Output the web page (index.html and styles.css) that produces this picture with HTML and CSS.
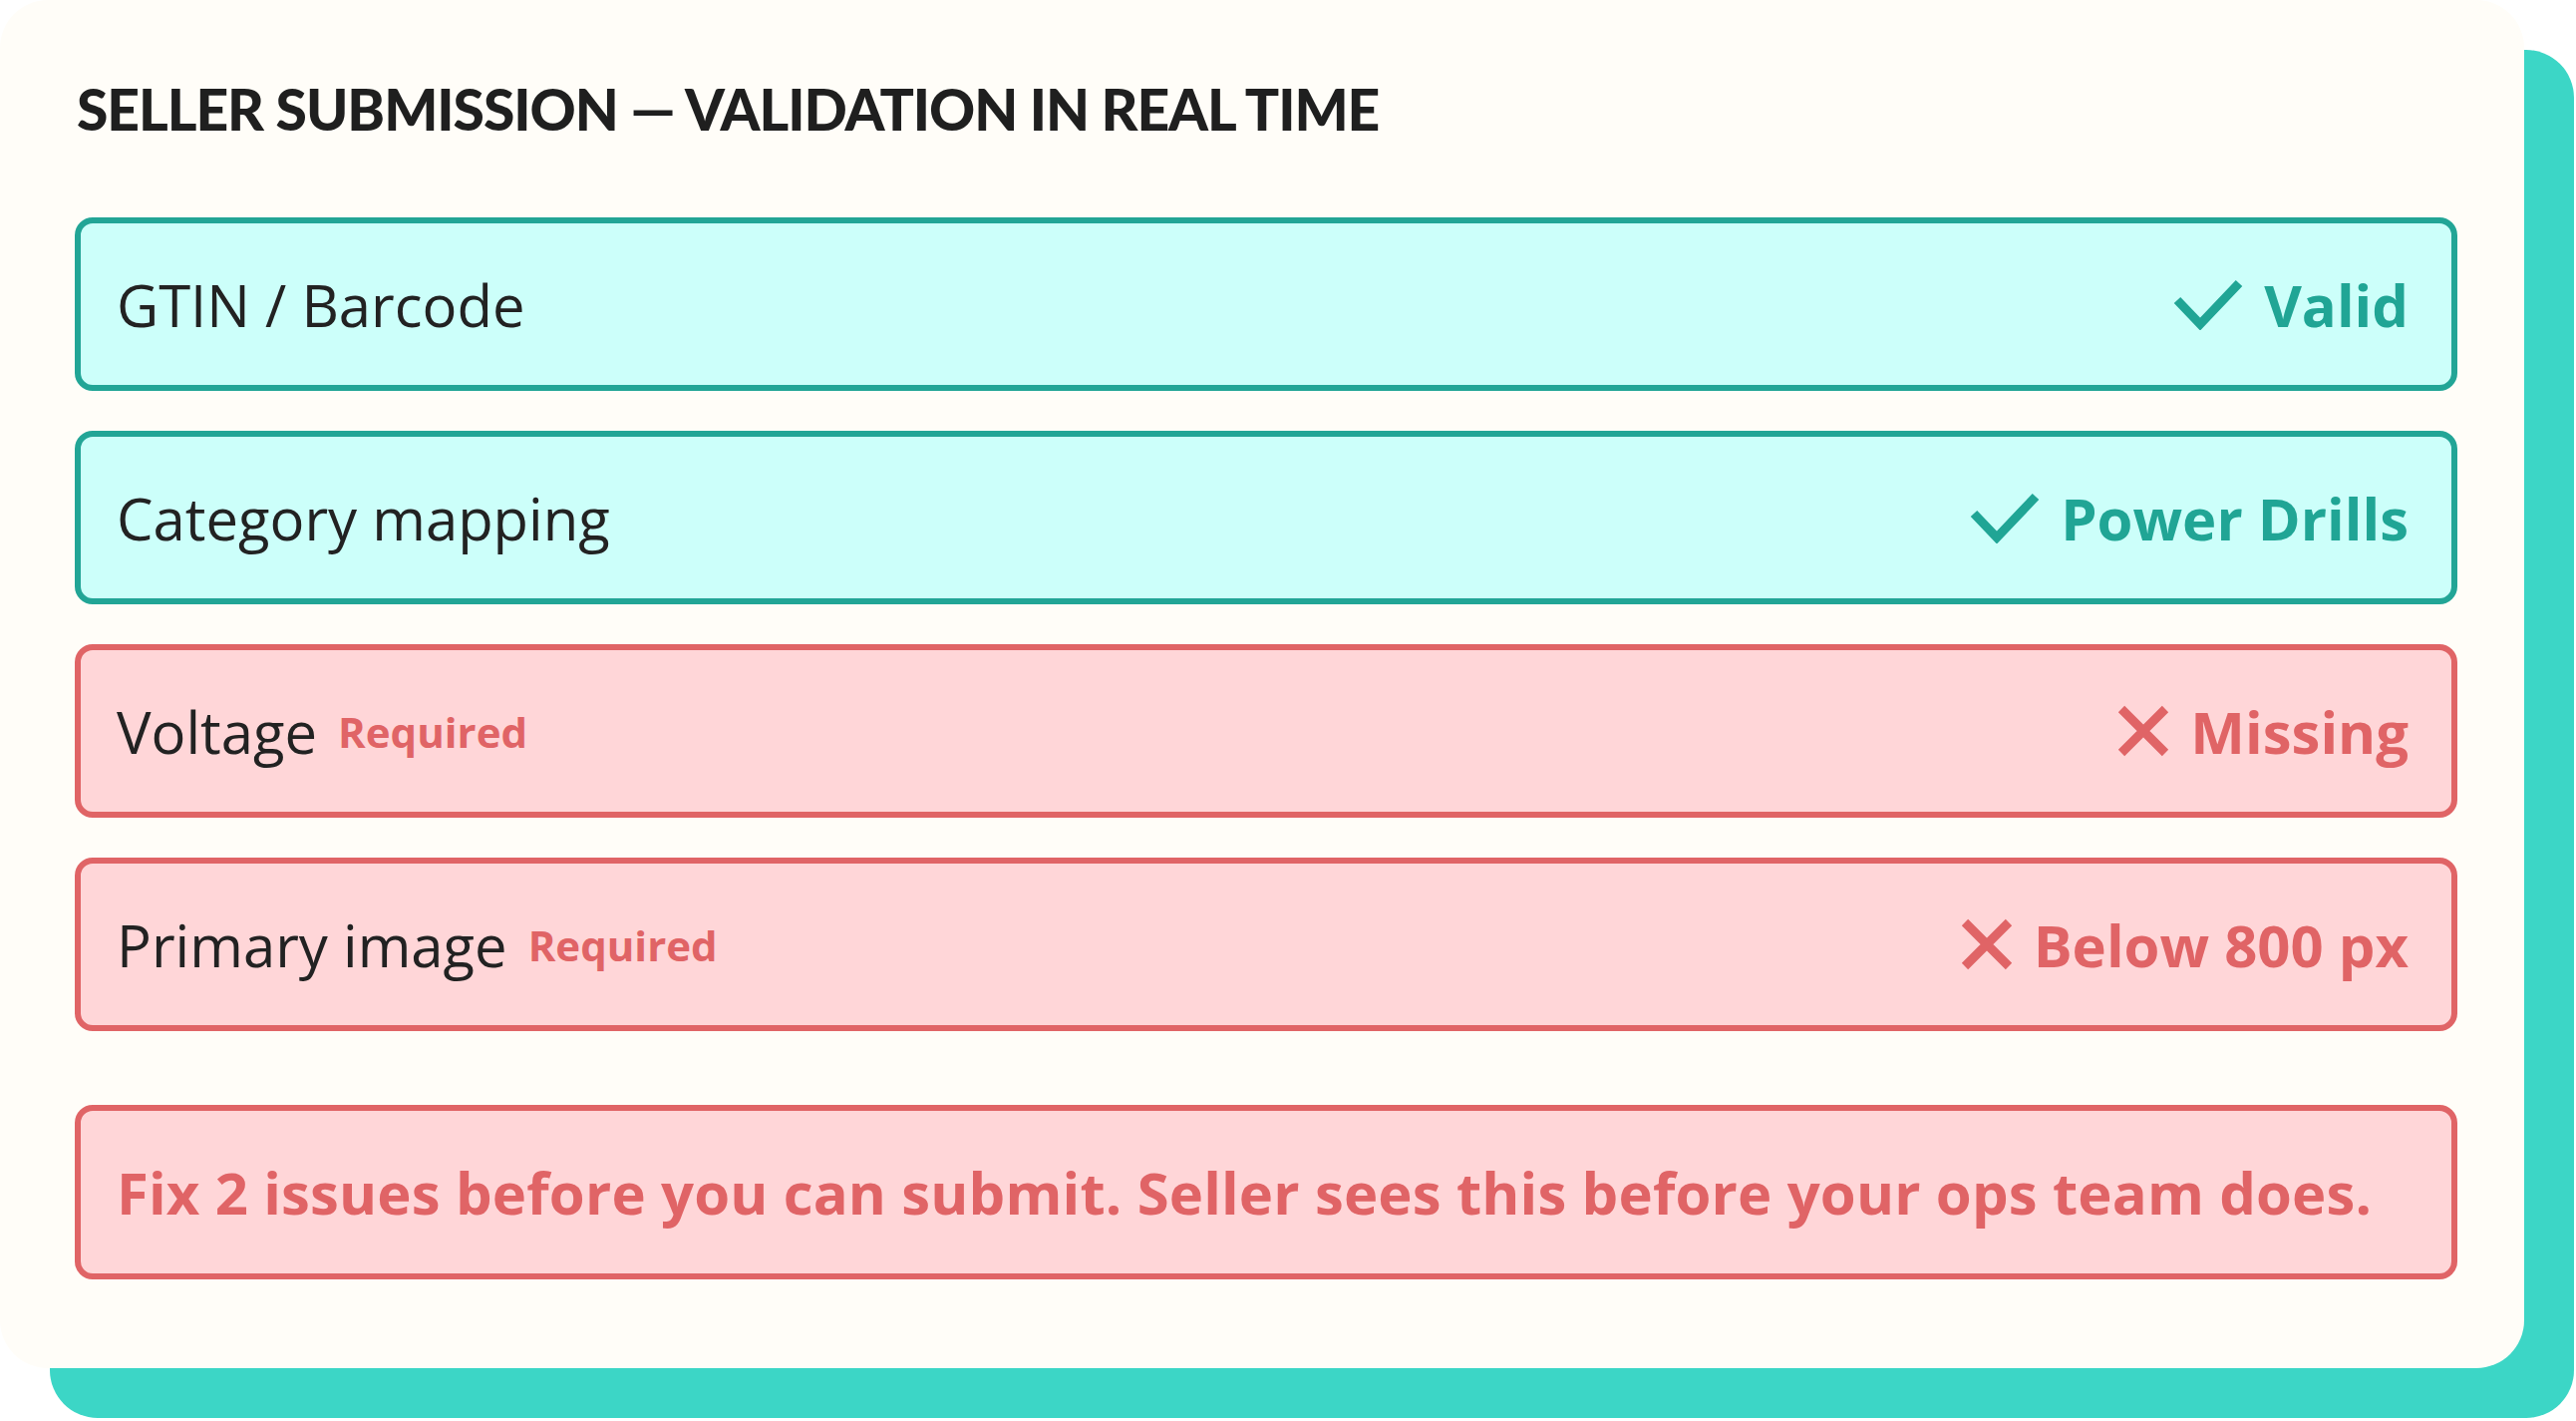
FILE: index.html
```html
<!DOCTYPE html>
<html lang="en">
<head>
<meta charset="utf-8">
<title>Seller submission — validation in real time</title>
<link rel="stylesheet" href="styles.css">
</head>
<body>
<main class="card">
  <h1 class="title">SELLER SUBMISSION — VALIDATION IN REAL TIME</h1>
  <div class="fields">
    <div class="field ok">
      <div class="label">GTIN / Barcode</div>
      <div class="status">
        <svg class="icon-check" viewBox="0 0 70 52" width="70" height="52" aria-hidden="true"><polyline points="4,22 27,46 66,5" fill="none" stroke="currentColor" stroke-width="9" stroke-linecap="butt" stroke-linejoin="miter"/></svg>
        <span>Valid</span>
      </div>
    </div>
    <div class="field ok">
      <div class="label">Category mapping</div>
      <div class="status">
        <svg class="icon-check" viewBox="0 0 70 52" width="70" height="52" aria-hidden="true"><polyline points="4,22 27,46 66,5" fill="none" stroke="currentColor" stroke-width="9" stroke-linecap="butt" stroke-linejoin="miter"/></svg>
        <span>Power Drills</span>
      </div>
    </div>
    <div class="field bad">
      <div class="label">Voltage <span class="req">Required</span></div>
      <div class="status">
        <svg class="icon-x" viewBox="0 0 52 52" width="52" height="52" aria-hidden="true"><path d="M4 4 L48 48 M48 4 L4 48" fill="none" stroke="currentColor" stroke-width="9" stroke-linecap="butt"/></svg>
        <span>Missing</span>
      </div>
    </div>
    <div class="field bad">
      <div class="label">Primary image <span class="req">Required</span></div>
      <div class="status">
        <svg class="icon-x" viewBox="0 0 52 52" width="52" height="52" aria-hidden="true"><path d="M4 4 L48 48 M48 4 L4 48" fill="none" stroke="currentColor" stroke-width="9" stroke-linecap="butt"/></svg>
        <span>Below 800 px</span>
      </div>
    </div>
  </div>
  <div class="summary">Fix 2 issues before you can submit. Seller sees this before your ops team does.</div>
</main>
</body>
</html>
```
FILE: styles.css
```css
html, body {
  margin: 0;
  padding: 0;
  background: #ffffff;
}

body {
  width: 2584px;
  height: 1425px;
  overflow: hidden;
}

.card {
  box-sizing: border-box;
  width: 2532px;
  height: 1372px;
  background: #fffdf8;
  border-radius: 48px;
  box-shadow: 50px 50px 0 0 #3cd6c6;
  padding: 81px 67px 0 75px;
  font-family: "Open Sans", "Liberation Sans", sans-serif;
  color: #222222;
}

.title {
  margin: 0 0 80px 2px;
  font-family: "Lato", "Liberation Sans", sans-serif;
  font-weight: 900;
  font-size: 57px;
  line-height: 1;
  letter-spacing: -1.05px;
  color: #1f1f1f;
}

.fields {
  display: flex;
  flex-direction: column;
  gap: 40px;
}

.field,
.summary {
  box-sizing: border-box;
  height: 174px;
  border: 6px solid;
  border-radius: 18px;
  display: flex;
  align-items: center;
  padding: 0 43px 0 36px;
}

.field {
  justify-content: space-between;
}

.field.ok {
  background: #ccfffa;
  border-color: #22a596;
}

.field.bad,
.summary {
  background: #ffd6d8;
  border-color: #e06466;
}

.label {
  display: flex;
  align-items: center;
  gap: 21px;
  font-size: 58px;
  font-weight: 400;
  color: #222222;
}

.req {
  font-size: 42px;
  font-weight: 700;
  color: #e06466;
}

.status {
  display: flex;
  align-items: center;
  gap: 21px;
  font-size: 58px;
  font-weight: 700;
}

.ok .status {
  color: #20a595;
}

.bad .status {
  color: #e06466;
}

.icon-check,
.icon-x {
  display: block;
  flex: none;
}

.summary {
  margin-top: 74px;
  height: 175px;
  font-size: 58px;
  font-weight: 700;
  letter-spacing: 0.15px;
  color: #e06466;
}
```
